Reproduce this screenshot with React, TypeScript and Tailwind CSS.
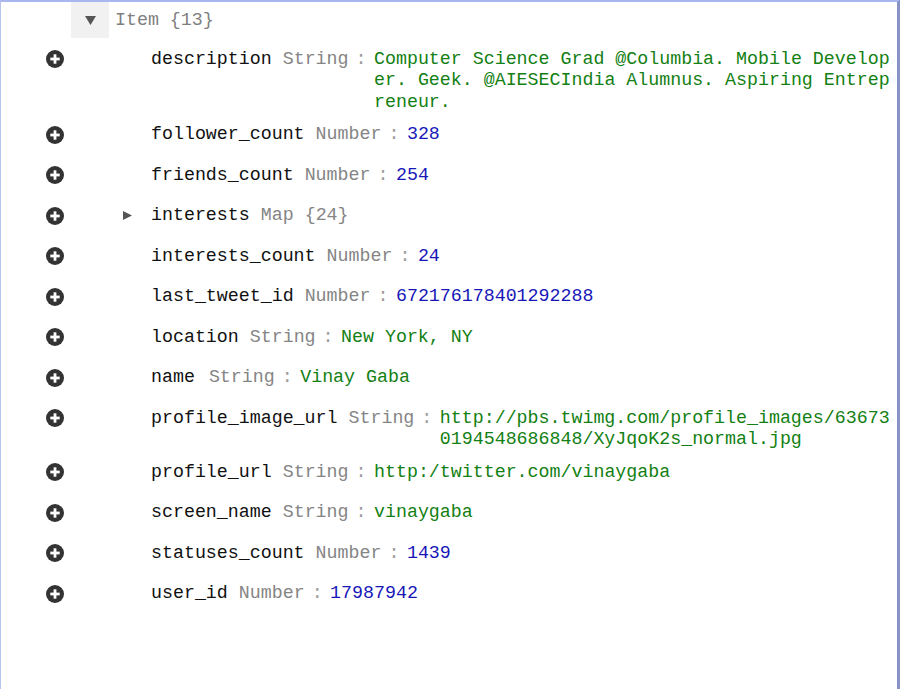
type Kind = 'String' | 'Number' | 'Map';

interface Field {
  name: string;
  kind: Kind;
  value: string;
  extraGap?: boolean;
}

const fields: Field[] = [
  {
    name: 'description',
    kind: 'String',
    value: 'Computer Science Grad @Columbia. Mobile Developer. Geek. @AIESECIndia Alumnus. Aspiring Entrepreneur.',
  },
  { name: 'follower_count', kind: 'Number', value: '328' },
  { name: 'friends_count', kind: 'Number', value: '254' },
  { name: 'interests', kind: 'Map', value: '{24}' },
  { name: 'interests_count', kind: 'Number', value: '24' },
  { name: 'last_tweet_id', kind: 'Number', value: '672176178401292288' },
  { name: 'location', kind: 'String', value: 'New York, NY' },
  { name: 'name', kind: 'String', value: 'Vinay Gaba', extraGap: true },
  {
    name: 'profile_image_url',
    kind: 'String',
    value: 'http://pbs.twimg.com/profile_images/636730194548686848/XyJqoK2s_normal.jpg',
  },
  { name: 'profile_url', kind: 'String', value: 'http:/twitter.com/vinaygaba' },
  { name: 'screen_name', kind: 'String', value: 'vinaygaba' },
  { name: 'statuses_count', kind: 'Number', value: '1439' },
  { name: 'user_id', kind: 'Number', value: '17987942' },
];

function PlusIcon() {
  return (
    <svg width="18" height="18" viewBox="0 0 18 18">
      <circle cx="9" cy="9" r="9" fill="#333333" />
      <rect x="4.3" y="7.6" width="9.4" height="2.8" fill="#ffffff" />
      <rect x="7.6" y="4.3" width="2.8" height="9.4" fill="#ffffff" />
    </svg>
  );
}

function Row({ field }: { field: Field }) {
  const isMap = field.kind === 'Map';
  return (
    <div className="flex items-start min-h-[40.5px] pt-[9.5px] pb-[1.5px]">
      <div className="ml-[45px] w-[18px] h-[21.5px] flex items-center shrink-0">
        <PlusIcon />
      </div>
      <div className="ml-[57px] w-[14px] h-[21.5px] flex items-center shrink-0">
        {isMap && (
          <svg width="11" height="11" viewBox="0 0 11 11">
            <polygon points="2,1 11,5.5 2,10" fill="#555555" />
          </svg>
        )}
      </div>
      <div className="ml-[16px] shrink-0 whitespace-pre">
        <span className="text-[#111111]">{field.name}</span>
        <span className={field.extraGap ? 'ml-[14px] text-[#858585]' : 'ml-[11px] text-[#858585]'}>
          {field.kind}
        </span>
        {isMap && <span className="ml-[11px] text-[#858585]">{field.value}</span>}
        {!isMap && <span className="pl-[7px] pr-[7.5px] text-[#9a9a9a]">:</span>}
      </div>
      {!isMap && (
        <div
          className={
            field.kind === 'Number'
              ? 'flex-1 min-w-0 break-all text-[#1717b8]'
              : 'flex-1 min-w-0 break-all text-[#138013]'
          }
        >
          {field.value}
        </div>
      )}
    </div>
  );
}

export default function App() {
  return (
    <div
      className="w-[900px] h-[689px] bg-white border-t-2 border-l border-r-[3px] border-t-[#aab7ee] border-l-[#b8c4f0] border-r-[#8893c8] overflow-hidden"
      style={{ fontFamily: '"Liberation Mono", "DejaVu Sans Mono", monospace' }}
    >
      <div className="pr-[3px] text-[18.3px] leading-[21.5px]">
        <div className="flex items-center h-[37px]">
          <div className="ml-[70px] w-[38px] h-[36px] self-start bg-[#f1f1f1] flex items-center justify-center">
            <svg width="11" height="10" viewBox="0 0 11 10">
              <polygon points="0,1 11,1 5.5,10" fill="#555555" />
            </svg>
          </div>
          <span className="ml-[6px] text-[#808080]">Item {'{13}'}</span>
        </div>
        {fields.map((f) => (
          <Row key={f.name} field={f} />
        ))}
      </div>
    </div>
  );
}
